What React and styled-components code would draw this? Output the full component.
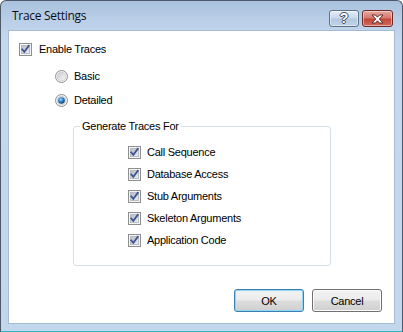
import React from "react";
import styled, { createGlobalStyle } from "styled-components";

const Global = createGlobalStyle`
  html, body { margin: 0; padding: 0; background: #ffffff; }
  body { width: 403px; height: 332px; overflow: hidden; }
  * { box-sizing: border-box; }
`;

const Window = styled.div`
  width: 403px;
  height: 332px;
  display: flex;
  flex-direction: column;
  border: 1px solid #4d5968;
  border-bottom-color: #2fb2c6;
  border-radius: 6px 6px 0 0;
  background: linear-gradient(to bottom, #a9c1dd 0px, #bcd1e9 22px, #c4d8ee 40px, #c2d6ec 100%);
  overflow: hidden;
`;

const TitleBar = styled.div`
  height: 29px;
  flex: none;
  display: flex;
  align-items: flex-start;
  justify-content: space-between;
  padding: 0 9px 0 11px;
`;

const Title = styled.div`
  margin-top: 7px;
  font-family: "Open Sans", "Liberation Sans", sans-serif;
  font-size: 12px;
  letter-spacing: -0.3px;
  line-height: 16px;
  color: #0b0f14;
`;

const CaptionButtons = styled.div`
  margin-top: 9px;
  display: flex;
  gap: 3px;
`;

const CaptionButton = styled.div`
  width: ${(p) => p.$w}px;
  height: 17px;
  border: 1px solid ${(p) => (p.$close ? "#6b2a24" : "#5f7389")};
  border-radius: 3px;
  display: flex;
  align-items: center;
  justify-content: center;
  background: ${(p) =>
    p.$close
      ? "linear-gradient(to bottom, #e8a89f 0%, #d77a6f 45%, #c5473a 55%, #cf6a5d 100%)"
      : "linear-gradient(to bottom, #e6eef8 0%, #c9d8ea 45%, #b3c8e0 55%, #c0d3ea 100%)"};
  box-shadow: inset 0 0 0 1px rgba(255, 255, 255, 0.45);
`;

const HelpGlyph = styled.span`
  font-family: "Liberation Sans", sans-serif;
  font-weight: bold;
  font-size: 14px;
  line-height: 13px;
  color: #ffffff;
  text-shadow: 1px 0 0 #3e4b5c, -1px 0 0 #3e4b5c, 0 1px 0 #3e4b5c, 0 -1px 0 #3e4b5c;
`;

const Frame = styled.div`
  flex: 1;
  display: flex;
  padding: 0 7px 7px 7px;
`;

const Client = styled.div`
  flex: 1;
  display: flex;
  flex-direction: column;
  background: #ffffff;
  border: 1px solid #a6bcd6;
  padding: 12px 0 0 10px;
  font-family: "Liberation Sans", Arial, sans-serif;
  font-size: 11px;
  letter-spacing: -0.25px;
  color: #000000;
`;

const Option = styled.label`
  display: flex;
  align-items: center;
  height: 13px;
  gap: ${(p) => p.$gap || 7}px;
  margin-top: ${(p) => p.$mt || 0}px;
  margin-left: ${(p) => p.$ml || 0}px;
  line-height: 13px;
  white-space: nowrap;
`;

const GroupBox = styled.div`
  position: relative;
  margin-left: 54px;
  margin-top: 19px;
  width: 258px;
  height: 140px;
  border: 1px solid #d5dfe5;
  border-radius: 3px;
  padding: 19px 0 0 54px;
  display: flex;
  flex-direction: column;
  gap: 9px;
`;

const Legend = styled.span`
  position: absolute;
  top: -7px;
  left: 6px;
  padding: 0 2px;
  background: #ffffff;
  line-height: 13px;
`;

const ButtonRow = styled.div`
  margin-top: auto;
  display: flex;
  justify-content: flex-end;
  gap: 8px;
  padding: 0 12px 11px 0;
`;

const Button = styled.button`
  width: 70px;
  height: 23px;
  padding: 0;
  font-family: "Liberation Sans", Arial, sans-serif;
  font-size: 11px;
  letter-spacing: -0.25px;
  color: #000;
  border: 1px solid ${(p) => (p.$default ? "#3c7fb1" : "#707070")};
  border-radius: 3px;
  background: linear-gradient(to bottom, #f2f2f2 0%, #ebebeb 48%, #dddddd 52%, #cfcfcf 100%);
  box-shadow: inset 0 0 0 1px ${(p) => (p.$default ? "#8fd7f6" : "#fcfcfc")};
`;

function CheckBox() {
  return (
    <svg width="13" height="13" viewBox="0 0 13 13" style={{ flex: "none" }}>
      <defs>
        <linearGradient id="cbg" x1="0" y1="0" x2="1" y2="1">
          <stop offset="0" stopColor="#b5b9bf" />
          <stop offset="1" stopColor="#eef0f2" />
        </linearGradient>
      </defs>
      <rect x="0.5" y="0.5" width="12" height="12" fill="#f5f5f5" stroke="#8e8f8f" />
      <rect x="2.5" y="2.5" width="8" height="8" fill="url(#cbg)" stroke="#b9bec4" />
      <path d="M3.2 6.4 L5.3 8.8 L9.8 2.8" fill="none" stroke="#3c5394" strokeWidth="1.7" strokeLinecap="square" />
    </svg>
  );
}

function Radio({ checked }) {
  return (
    <svg width="13" height="13" viewBox="0 0 13 13" style={{ flex: "none" }}>
      <defs>
        <linearGradient id="rbg" x1="0" y1="0" x2="1" y2="1">
          <stop offset="0" stopColor="#c9cbcf" />
          <stop offset="1" stopColor="#f7f7f7" />
        </linearGradient>
        <radialGradient id="rdot" cx="0.4" cy="0.35" r="0.65">
          <stop offset="0" stopColor="#9fdcff" />
          <stop offset="0.5" stopColor="#2a86d1" />
          <stop offset="1" stopColor="#123e6e" />
        </radialGradient>
      </defs>
      <circle cx="6.5" cy="6.5" r="6" fill="#f4f4f4" stroke="#8e8f8f" />
      <circle cx="6.5" cy="6.5" r="4.3" fill="url(#rbg)" stroke="#c0c3c7" strokeWidth="0.6" />
      {checked && <circle cx="6.5" cy="6.5" r="3.3" fill="url(#rdot)" />}
    </svg>
  );
}

function CloseIcon() {
  return (
    <svg width="13" height="10" viewBox="0 0 13 10">
      <path
        d="M1 1 H4.5 L6.5 3.2 L8.5 1 H12 L8.3 5 L12 9 H8.5 L6.5 6.8 L4.5 9 H1 L4.7 5 Z"
        fill="#ffffff"
        stroke="#4a2320"
        strokeWidth="0.9"
        strokeLinejoin="round"
      />
    </svg>
  );
}

const items = [
  "Call Sequence",
  "Database Access",
  "Stub Arguments",
  "Skeleton Arguments",
  "Application Code",
];

export default function App() {
  return (
    <>
      <Global />
      <Window>
        <TitleBar>
          <Title>Trace Settings</Title>
          <CaptionButtons>
            <CaptionButton $w={30}>
              <HelpGlyph>?</HelpGlyph>
            </CaptionButton>
            <CaptionButton $w={31} $close>
              <CloseIcon />
            </CaptionButton>
          </CaptionButtons>
        </TitleBar>
        <Frame>
          <Client>
            <Option>
              <CheckBox />
              <span>Enable Traces</span>
            </Option>
            <Option $ml={36} $mt={14} $gap={6}>
              <Radio />
              <span>Basic</span>
            </Option>
            <Option $ml={36} $mt={11} $gap={6}>
              <Radio checked />
              <span>Detailed</span>
            </Option>
            <GroupBox>
              <Legend>Generate Traces For</Legend>
              {items.map((t) => (
                <Option key={t} $gap={6}>
                  <CheckBox />
                  <span>{t}</span>
                </Option>
              ))}
            </GroupBox>
            <ButtonRow>
              <Button $default>OK</Button>
              <Button>Cancel</Button>
            </ButtonRow>
          </Client>
        </Frame>
      </Window>
    </>
  );
}
